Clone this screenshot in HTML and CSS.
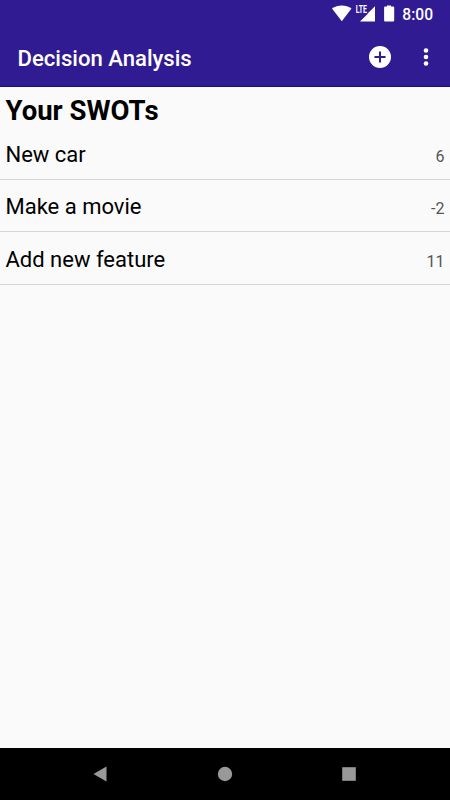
FILE: index.html
```html
<!DOCTYPE html>
<html lang="en">
<head>
  <meta charset="utf-8">
  <title>Decision Analysis</title>
  <link rel="stylesheet" href="styles.css">
</head>
<body>
  <div class="status-bar">
    <svg class="status-icons" width="66" height="20" viewBox="0 0 66 20">
      <path d="M0 3.6C5.5-.7 14-.7 19.5 3.6L9.8 16.2z"/>
      <path d="M43 1.3V16.5H28L35.6 9V8.600z"/>
      <text class="lte" transform="translate(23.700 8.200) scale(.66 1)">LTE</text>
      <path d="M55 1.6V.5h4v1.1h2.2q1 0 1 1v12.8q0 1-1 1h-8.100q-1 0-1-1V2.600q0-1 1-1z"/>
    </svg>
    <span class="clock">8:00</span>
  </div>

  <header>
    <span class="app-title">Decision Analysis</span>
    <div class="actions">
      <svg class="add" width="24" height="24" viewBox="0 0 24 24">
        <circle cx="12" cy="12" r="11"/>
        <path d="M12 6.500v11M6.500 12h11"/>
      </svg>
      <svg class="more" width="6" height="20" viewBox="0 0 6 20">
        <circle cx="3" cy="3.500" r="2.300"/>
        <circle cx="3" cy="10" r="2.300"/>
        <circle cx="3" cy="16.500" r="2.300"/>
      </svg>
    </div>
  </header>

  <main>
    <h1>Your SWOTs</h1>
    <ul class="swots">
      <li><span class="name">New car</span><span class="score">6</span></li>
      <li><span class="name">Make a movie</span><span class="score">-2</span></li>
      <li><span class="name">Add new feature</span><span class="score">11</span></li>
    </ul>
  </main>

  <footer>
    <svg width="16" height="16" viewBox="0 0 16 16"><path d="M.5 8L13.500 .6V15.400z"/></svg>
    <svg width="16" height="16" viewBox="0 0 16 16"><circle cx="8" cy="8" r="7.200"/></svg>
    <svg width="16" height="16" viewBox="0 0 16 16"><rect x="1.200" y="1.200" width="13.600" height="13.600"/></svg>
  </footer>
</body>
</html>
```
FILE: styles.css
```css
* {
  box-sizing: border-box;
}
body {
  display: flex;
  flex-direction: column;
  height: 100vh;
  margin: 0;
  font-family: Roboto, sans-serif;
  background-color: #fafafa;
  color: #000;
  overflow: hidden;
}
svg {
  display: block;
}
.status-bar {
  display: flex;
  justify-content: flex-end;
  height: 27px;
  padding: 4.5px 17px 0 0;
  background-color: #311b92;
  color: white;
}
.status-icons {
  fill: white;
  margin-right: 4px;
}
.lte {
  font-size: 10.5px;
  font-weight: 700;
}
.clock {
  font-size: 15.6px;
  font-weight: 500;
  line-height: 20px;
}
header {
  display: flex;
  align-items: center;
  justify-content: space-between;
  height: 60px;
  padding: 0 21px 0 17.5px;
  background-color: #311b92;
  border-bottom: 1px solid #1a0a8c;
  color: white;
}
.app-title {
  font-size: 22.1px;
  font-weight: 500;
  padding-top: 3px;
}
.actions {
  display: flex;
  align-items: center;
  gap: 31px;
}
.actions svg {
  fill: white;
}
.add path {
  stroke: #311b92;
  stroke-width: 2;
}
main {
  flex: 1;
}
h1 {
  margin: 0;
  padding: 8px 5.5px 0;
  height: 40px;
  font-size: 27.5px;
  line-height: 32px;
}
.swots {
  list-style: none;
  margin: 0;
  padding: 0;
}
.swots li {
  display: flex;
  align-items: center;
  justify-content: space-between;
  height: 52.5px;
  padding: 3px 5.5px 0;
  border-bottom: 1px solid #d5d5d5;
}
.name {
  font-size: 22px;
}
.score {
  font-size: 16px;
  color: #555;
  padding-top: 4px;
}
footer {
  display: flex;
  align-items: center;
  justify-content: center;
  gap: 108px;
  height: 52px;
  background-color: black;
}
footer svg {
  fill: #999;
}
```
